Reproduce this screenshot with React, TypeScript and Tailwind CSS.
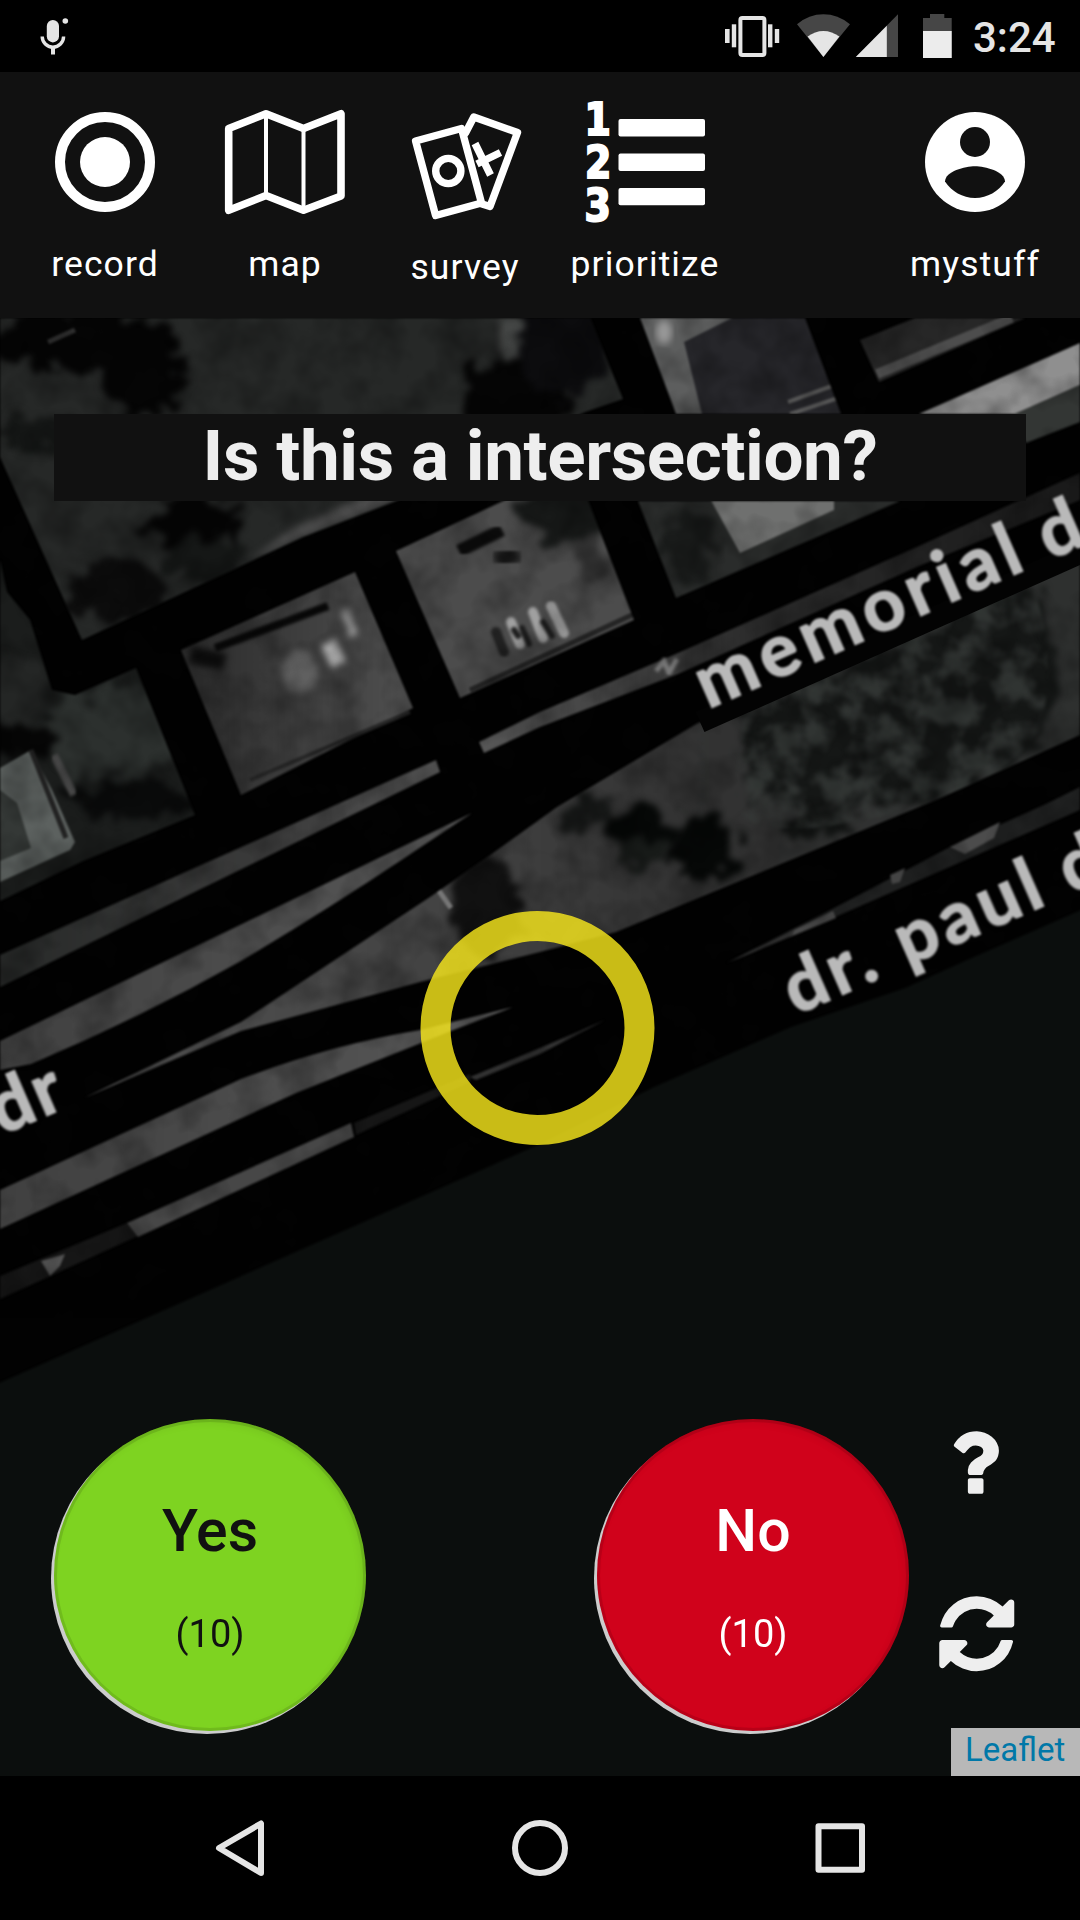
import type { ReactNode } from 'react';

function StatusBar() {
  return (
    <div className="flex h-[72px] items-start bg-black text-[#e5e5e5]">
      <svg className="ml-[36px] h-[72px] w-[36px]" viewBox="36 0 36 72" fill="none">
        <rect x="46.8" y="20" width="12.2" height="22.4" rx="6.1" fill="#e5e5e5" />
        <path d="M42.2 36.5a10.7 10.7 0 0 0 21.4 0" stroke="#e5e5e5" strokeWidth="3.4" />
        <path d="M53 46v8.5" stroke="#e5e5e5" strokeWidth="4" />
        <circle cx="65.3" cy="21" r="2.8" fill="#e5e5e5" />
      </svg>
      <svg className="ml-auto h-[72px] w-[240px]" viewBox="720 0 240 72" fill="#e5e5e5">
        <rect x="740.4" y="18" width="24" height="37" rx="2" fill="none" stroke="#e5e5e5" strokeWidth="4" />
        <rect x="725" y="29" width="4.6" height="14" />
        <rect x="731.8" y="24.3" width="4.4" height="23" />
        <rect x="768" y="24.3" width="4.4" height="23" />
        <rect x="774.8" y="29" width="4.4" height="14" />
        <path d="M823.4 57L797 24.2Q809 14.3 823.4 14.3T850 24.2z" fill="#464646" />
        <path d="M823.4 57L807.6 36.6Q815 31 823.4 31T839.4 36.6z" />
        <path d="M855.8 57L898 14.3V57z" fill="#464646" />
        <path d="M855.8 57L886.8 25.7V57z" />
        <path d="M923 58V18h7v-4h14.3v4h7.4v40z" fill="#464646" />
        <path d="M923 31h28.700v27H923z" fill="#ececec" />
      </svg>
      <div className="w-[120px] pl-[13px] pt-[8px] text-[42px] font-medium leading-[60px]">3:24</div>
    </div>
  );
}

function Tab({ label, x, low, children }: { label: string; x: number; low?: boolean; children: ReactNode }) {
  return (
    <div className="flex w-[180px] flex-col items-center">
      <svg className="h-[160px] w-[180px]" viewBox={`${x} 72 180 160`} fill="none" stroke="#fff">
        {children}
      </svg>
      <span className={low ? 'mt-[13px] text-[35.5px] leading-[44px] tracking-[1.1px]' : 'mt-[10px] text-[35.5px] leading-[44px] tracking-[1.1px]'}>
        {label}
      </span>
    </div>
  );
}

function Header() {
  return (
    <div className="flex h-[246px] bg-[#111111] px-[15px] text-white">
      <Tab label="record" x={15}>
        <circle cx="105" cy="162" r="45" strokeWidth="10" />
        <circle cx="105" cy="162" r="25" fill="#fff" stroke="none" />
      </Tab>
      <Tab label="map" x={195}>
        <path d="M228.700 128.500L266 113.800L303.500 128.500L341 113.800V196L303.500 210.300L266 195.500L228.700 210.300z" strokeWidth="7.6" strokeLinejoin="round" />
        <path d="M266 116v78M303.500 130v78" strokeWidth="4" />
      </Tab>
      <Tab label="survey" x={375} low>
        <g strokeWidth="7.400" strokeLinejoin="round" strokeLinecap="round">
          <path d="M415.600 141L461.500 128.500L481.500 203L435.600 215.500z" />
          <path d="M465.500 133L473.800 117L517.500 132.500L490 206.500L482 204" />
          <circle cx="448.300" cy="171" r="12.600" />
          <path d="M475 143.500L490.500 175M500.500 152.500L477 164" strokeLinecap="butt" />
        </g>
      </Tab>
      <Tab label="prioritize" x={555}>
        <g fill="#fff" stroke="none">
          <rect x="618.500" y="119" width="86.500" height="17.500" rx="2" />
          <rect x="618.500" y="153.500" width="86.500" height="17.500" rx="2" />
          <rect x="618.500" y="188" width="86.500" height="17.200" rx="2" />
        </g>
        <g fill="#fff" stroke="#fff" strokeWidth="2.200" fontFamily="DejaVu Sans, sans-serif" fontWeight="700" fontSize="44">
          <text transform="translate(584.500 135.300) scale(.86 1)">1</text>
          <text transform="translate(585 178.300) scale(.86 1)">2</text>
          <text transform="translate(584.500 220.700) scale(.86 1)">3</text>
        </g>
      </Tab>
      <div className="ml-auto">
        <Tab label="mystuff" x={885}>
          <circle cx="975" cy="162" r="50" fill="#fff" stroke="none" />
          <circle cx="975" cy="142" r="15" fill="#111" stroke="none" />
          <path d="M945 181.500C945.200 171.500 965 166.300 975 166.300S1004.800 171.500 1005 181.500C998.500 191.200 987.500 198 975 198S951.500 191.200 945 181.500z" fill="#111" stroke="none" />
        </Tab>
      </div>
    </div>
  );
}

function Aerial() {
  const park = '84,1098 241,1022 430,897 482,861 557,807 698,723 740,711 1022,585 1080,562 1080,735 936,800 616,932 540,952 420,982 241,1031';
  return (
    <svg className="absolute inset-0 h-full w-full" viewBox="0 318 1080 1458">
      <defs>
        <filter id="speckle" x="0" y="0" width="100%" height="100%" colorInterpolationFilters="sRGB">
          <feTurbulence type="fractalNoise" baseFrequency=".025" numOctaves="3" seed="7" />
          <feColorMatrix values="0 0 0 0 0  0 0 0 0 0  0 0 0 0 0  1.600 0 0 0 -.6" />
        </filter>
        <filter id="leaves" x="-20%" y="-20%" width="140%" height="140%" colorInterpolationFilters="sRGB">
          <feTurbulence type="fractalNoise" baseFrequency=".05" numOctaves="3" seed="3" result="n" />
          <feDisplacementMap in="SourceGraphic" in2="n" scale="46" xChannelSelector="R" yChannelSelector="G" />
          <feGaussianBlur stdDeviation="3" />
        </filter>
        <filter id="canopy" x="0" y="0" width="100%" height="100%" colorInterpolationFilters="sRGB">
          <feTurbulence type="fractalNoise" baseFrequency=".04" numOctaves="3" seed="12" />
          <feColorMatrix values="0 0 0 0 .22  0 0 0 0 .235  0 0 0 0 .228  3.400 0 0 0 -1.300" result="t" />
          <feComposite in="t" in2="SourceAlpha" operator="in" />
          <feGaussianBlur stdDeviation="1.500" />
        </filter>
        <filter id="soft" colorInterpolationFilters="sRGB"><feGaussianBlur stdDeviation="1.200" /></filter>
        <filter id="softer" colorInterpolationFilters="sRGB"><feGaussianBlur stdDeviation="3.500" /></filter>
        <linearGradient id="lot1" x1="0" y1="0" x2="1" y2="0">
          <stop offset="0" stopColor="#2b2b2b" />
          <stop offset="1" stopColor="#505050" />
        </linearGradient>
        <linearGradient id="gore" x1="0" y1="0" x2="1" y2="0">
          <stop offset="0" stopColor="#404040" />
          <stop offset="1" stopColor="#585858" />
        </linearGradient>
        <linearGradient id="verge" x1="0" y1="0" x2="1" y2="0">
          <stop offset="0" stopColor="#282a29" />
          <stop offset=".65" stopColor="#3c3c3c" />
          <stop offset="1" stopColor="#555" />
        </linearGradient>
        <linearGradient id="verge2" x1="0" y1="0" x2="1" y2="0">
          <stop offset="0" stopColor="#585858" />
          <stop offset=".45" stopColor="#2c2c2c" />
          <stop offset="1" stopColor="#191919" />
        </linearGradient>
        <linearGradient id="grass" x1="0" y1="0" x2="1" y2="0">
          <stop offset="0" stopColor="#525252" />
          <stop offset=".4" stopColor="#414141" />
          <stop offset=".6" stopColor="#333" />
          <stop offset="1" stopColor="#2e302f" />
        </linearGradient>
        <clipPath id="blockA"><polygon points="0,457 0,318 590,318 623,399 585,412 396,501 303,537 82,640" /></clipPath>
        <clipPath id="blockD"><polygon points="0,560 7,592 30,620 52,690 75,695 136,668 195,815 83,861 0,901" /></clipPath>
        <clipPath id="lotF"><polygon points="396,551 516,495 586,495 634,620 460,698" /></clipPath>
        <clipPath id="blockH"><polygon points="638,501 900,501 676,598" /></clipPath>
        <clipPath id="blockG"><polygon points="640,318 805,318 841,414 676,414" /></clipPath>
        <clipPath id="parkClip"><polygon points={park} /></clipPath>
      </defs>
      <rect y="318" width="1080" height="1458" fill="#020202" />

      <g filter="url(#soft)">
        <g clipPath="url(#blockA)">
          <rect y="318" width="640" height="330" fill="#262827" />
          <path d="M500 318h70l-40 60-30-20z" fill="#444645" filter="url(#softer)" />
          <path d="M290 530L400 480L396 501L303 537L250 560z" fill="#4c4c4c" filter="url(#softer)" />
          <g filter="url(#leaves)" fill="#050505">
            <ellipse cx="80" cy="340" rx="95" ry="28" />
            <ellipse cx="145" cy="370" rx="42" ry="46" />
            <ellipse cx="40" cy="430" rx="40" ry="14" fill="#141615" />
            <ellipse cx="520" cy="395" rx="55" ry="38" />
            <ellipse cx="565" cy="345" rx="45" ry="50" fill="#0c0c0e" />
            <ellipse cx="195" cy="520" rx="48" ry="26" />
            <ellipse cx="205" cy="560" rx="36" ry="24" fill="#151716" />
            <ellipse cx="118" cy="590" rx="50" ry="32" fill="#0c0c0c" />
          </g>
          <path d="M48 342L75 330" stroke="#2e2e2e" strokeWidth="5" />
        </g>
        <g clipPath="url(#blockD)">
          <rect y="550" width="200" height="360" fill="#1b1d1c" />
          <g filter="url(#leaves)">
            <ellipse cx="110" cy="735" rx="70" ry="46" fill="#2c302e" />
            <ellipse cx="14" cy="690" rx="40" ry="36" fill="#242625" />
            <ellipse cx="20" cy="740" rx="42" ry="16" fill="#060606" />
            <ellipse cx="135" cy="800" rx="70" ry="18" fill="#0a0b0b" />
          </g>
          <polygon points="0,768 31,750 52,790 75,842 70,850 0,882" fill="#5c615f" />
          <polygon points="0,790 17,803 31,848 0,861" fill="#343836" />
          <path d="M31 750L66 838" stroke="#222" strokeWidth="5" />
          <path d="M54 755L74 795" stroke="#484848" strokeWidth="8" filter="url(#soft)" />
        </g>

        <polygon points="181,650 355,572 413,708 241,795" fill="url(#lot1)" />
        <path d="M215 648L328 606" stroke="#080808" strokeWidth="8" filter="url(#soft)" />
        <path d="M250 780L410 712" stroke="#262626" strokeWidth="4" />
        <g filter="url(#softer)">
          <ellipse cx="300" cy="672" rx="18" ry="22" fill="#606060" />
          <path d="M328 642l11 22" stroke="#d4d4d4" strokeWidth="15" />
          <path d="M345 610l9 26" stroke="#a4a4a4" strokeWidth="8" />
          <path d="M190 655L225 662" stroke="#0b0b0b" strokeWidth="18" />
        </g>

        <g clipPath="url(#lotF)">
          <rect x="390" y="490" width="250" height="220" fill="#4c4c4c" />
          <g filter="url(#leaves)">
            <ellipse cx="565" cy="515" rx="46" ry="28" fill="#171918" />
            <ellipse cx="590" cy="560" rx="16" ry="26" fill="#333" />
          </g>
          <path d="M459 551L502 530" stroke="#0c0c0c" strokeWidth="13" filter="url(#soft)" />
          <path d="M496 562L518 552" stroke="#141414" strokeWidth="20" filter="url(#softer)" />
          <g stroke="#a0a0a0" strokeWidth="10" strokeLinecap="round" filter="url(#soft)">
            <path d="M511 622l9 22M533 612l10 26M551 606l13 27" />
            <path d="M496 632l8 20" stroke="#222" />
            <path d="M522 628l7 16M543 622l9 14M514 630l4 6" stroke="#1c1c1c" strokeWidth="6" />
          </g>
          <path d="M470 690L634 614" stroke="#242424" strokeWidth="5" />
        </g>

        <g clipPath="url(#blockG)">
          <rect x="630" y="318" width="220" height="100" fill="#26262a" />
          <path d="M640 318H732L684 342L702 414H676z" fill="#5d5e5e" />
          <ellipse cx="664" cy="332" rx="8" ry="12" fill="#999" filter="url(#softer)" />
          <path d="M790 414L838 398M788 402L832 386" stroke="#5a5a5a" strokeWidth="4" />
        </g>
        <g clipPath="url(#blockH)">
          <rect x="630" y="495" width="280" height="110" fill="#2a2c2b" />
          <polygon points="708,495 834,495 834,510 740,553" fill="#6f706f" />
          <ellipse cx="688" cy="550" rx="26" ry="40" fill="#191b1a" filter="url(#leaves)" />
        </g>
        <polygon points="860,340 915,318 1025,318 879,382" fill="#272727" />
        <path d="M877 374L1012 318" stroke="#4d4d4d" strokeWidth="10" />
        <polygon points="919,414 1080,343 1080,385 1015,414" fill="#8f8f8f" />
        <polygon points="1015,414 1080,385 1080,422 1026,443" fill="#333634" />

        <polygon points="0,955 436,760 440,772 0,987" fill="url(#verge)" />
        <polygon points="479,742 540,712 678,653 919,546 1080,473 1080,500 919,566 678,674 540,727 484,753" fill="url(#verge2)" />
        <path d="M656 671l8-10 5 12 8-14" stroke="#777" strokeWidth="5" fill="none" filter="url(#soft)" />
        <path d="M0 1041L472 813L406 857Q330 908 241 961Q140 1018 31 1064L0 1070z" fill="url(#gore)" />

        <g clipPath="url(#parkClip)">
          <rect x="80" y="550" width="1000" height="560" fill="url(#grass)" />
          <g filter="url(#leaves)">
            <path d="M745 710L1030 580Q1065 650 1050 720Q990 800 880 810Q760 820 745 780z" fill="#151716" />
            <ellipse cx="640" cy="830" rx="34" ry="22" fill="#060807" />
            <ellipse cx="705" cy="850" rx="34" ry="34" fill="#060807" />
            <ellipse cx="640" cy="850" rx="28" ry="14" fill="#171a18" />
            <ellipse cx="485" cy="905" rx="36" ry="50" fill="#111" />
            <ellipse cx="590" cy="812" rx="30" ry="14" fill="#181a19" />
            <ellipse cx="820" cy="826" rx="40" ry="12" fill="#101211" />
          </g>
          <path d="M745 700L1030 580Q1060 650 1040 730Q990 800 860 820Q720 850 735 780z" fill="#fff" filter="url(#canopy)" opacity=".8" />
          <path d="M437 888l14 20" stroke="#777" strokeWidth="5" />
        </g>

        <path d="M0 1190L241 1079Q330 1045 420 1030L513 1007L451 1031L296 1093L0 1229z" fill="url(#gore)" />
        <polygon points="0,1276 127,1223 138,1236 0,1299" fill="#161616" />
        <polygon points="41,1261 65,1254 60,1266 50,1276" fill="#555" />
        <polygon points="127,1223 351,1123 354,1137 138,1237" fill="#474747" />
        <polygon points="354,1123 470,1074 470,1082 356,1135" fill="#161616" />
        <polygon points="470,1077 540,1048 605,1020 540,1054 476,1080" fill="#343434" />
        <polygon points="726,963 836,907 950,847 1046,804 1080,787 1080,810 833,918" fill="#1f2020" />
        <polygon points="790,932 833,911 836,918 790,937" fill="#4a4a4a" />
        <polygon points="730,962 795,929 792,936" fill="#333" />
        <polygon points="890,875 905,868 900,882 892,884" fill="#444" />
        <polygon points="950,847 1000,822 994,838 965,854" fill="#4c4c4c" />
      </g>
      <rect y="318" width="1080" height="1000" filter="url(#speckle)" opacity=".4" />

      <polygon points="-10,1387 540,1144 654,1087 791,1027 905,988 967,960 1090,906 1090,1790 -10,1790" fill="#0b0e0d" filter="url(#soft)" />
      <path d="M700 722L1080 553" stroke="#030303" strokeWidth="22" />

      <g fill="#b9b9b9" stroke="#b9b9b9" strokeWidth="1.800" fontFamily="Lato, sans-serif" fontSize="73" fontWeight="700" filter="url(#soft)">
        <text transform="translate(708 709) rotate(-23.700)" textLength="348">memorial</text>
        <text transform="translate(1050 560) rotate(-23.700)">d</text>
        <text transform="translate(796 1015) rotate(-23.800)" textLength="275">dr. paul</text>
        <text transform="translate(1071 894) rotate(-23.800)">d</text>
        <text transform="translate(2 1135) rotate(-23.500)" textLength="72">dr</text>
      </g>
      <circle cx="537.500" cy="1028" r="102" fill="none" stroke="#fbeb1b" strokeWidth="30" opacity=".8" />
    </svg>
  );
}

function Answer({ label, tone }: { label: string; tone: string }) {
  return (
    <button className={`flex size-[312px] flex-col items-center rounded-full pt-[77px] shadow-[-3px_3px_0_#ccc,inset_0_0_0_3px_rgba(0,0,0,.1),inset_-3px_3px_9px_rgba(0,0,0,.08)] ${tone}`}>
      <span className="text-[59px] font-medium leading-[70px]">{label}</span>
      <span className="mt-[44px] text-[38px] leading-[48px]">(10)</span>
    </button>
  );
}

function MapView() {
  return (
    <div className="relative h-[1458px] overflow-hidden">
      <Aerial />
      <div className="relative flex h-full flex-col pt-[96px]">
        <h1 className="mx-[54px] h-[87px] bg-[#111111] text-center text-[71px] font-bold leading-[83px] tracking-[-0.4px] text-[#eeeeee]">
          Is this a intersection?
        </h1>
        <div className="mt-auto flex items-start pl-[54px]">
          <Answer label="Yes" tone="bg-[#7ed321] text-[#111111]" />
          <div className="ml-[231px]">
            <Answer label="No" tone="bg-[#d0021b] text-white" />
          </div>
          <div className="ml-[24px] flex flex-col gap-[77px] pt-[6px]">
            <svg className="size-[87.500px]" viewBox="-10 0 1792 1792" fill="#eee">
              <path d="M1024 1128v240q0 16-12 28t-28 12h-240q-16 0-28-12t-12-28v-240q0-16 12-28t28-12h240q16 0 28 12t12 28zm316-600q0 54-15.500 101t-35 76.500-55 59.500-57.500 43.500-61 35.500q-41 23-68.500 65t-27.500 67q0 17-12 32.500t-28 15.500h-240q-15 0-25.500-18.500t-10.500-37.500v-45q0-83 65-156.500t143-108.500q59-27 84-56t25-76q0-42-46.500-74t-107.500-32q-65 0-108 29-35 25-107 115-13 16-31 16-12 0-25-8l-164-125q-13-10-15.500-25t5.500-28q160-266 464-266 80 0 161 31t146 83 106 127.500 41 158.500z" />
            </svg>
            <svg className="size-[87.500px]" viewBox="0 0 1792 1792" fill="#eee">
              <path d="M1639 1056q0 5-1 7-64 268-268 434.500t-478 166.500q-146 0-282.500-55t-243.500-157l-129 129q-19 19-45 19t-45-19-19-45v-448q0-26 19-45t45-19h448q26 0 45 19t19 45-19 45l-137 137q71 66 161 102t187 36q134 0 250-65t186-179q11-17 53-117 8-23 30-23h192q13 0 22.500 9.500t9.500 22.500zm25-800v448q0 26-19 45t-45 19h-448q-26 0-45-19t-19-45 19-45l138-138q-148-137-349-137-134 0-250 65t-186 179q-11 17-53 117-8 23-30 23h-199q-13 0-22.500-9.500t-9.500-22.500v-7q65-268 270-434.500t480-166.500q146 0 284 55.500t245 156.500l130-129q19-19 45-19t45 19 19 45z" />
            </svg>
          </div>
        </div>
        <div className="-mt-[3px] ml-auto h-[48px] w-[129px] bg-[#b8b8b8] pl-[14px] text-[33px] leading-[43px] text-[#0078a8]">
          Leaflet
        </div>
      </div>
    </div>
  );
}

function NavBar() {
  return (
    <div className="flex h-[144px] items-center justify-between bg-black px-[204px]">
      <svg className="size-[72px]" viewBox="204 1812 72 72" fill="none" stroke="#e5e5e5" strokeWidth="6" strokeLinejoin="round">
        <path d="M261 1823.500V1873L219 1848z" />
      </svg>
      <svg className="size-[72px]" viewBox="504 1812 72 72" fill="none" stroke="#e5e5e5" strokeWidth="6">
        <circle cx="540" cy="1848" r="25" />
      </svg>
      <svg className="size-[72px]" viewBox="804 1812 72 72" fill="none" stroke="#e5e5e5" strokeWidth="6" strokeLinejoin="round">
        <rect x="818.500" y="1826.200" width="43.500" height="43.500" />
      </svg>
    </div>
  );
}

export default function App() {
  return (
    <div className="h-[1920px] w-[1080px] overflow-hidden bg-black font-['Roboto',sans-serif]">
      <StatusBar />
      <Header />
      <MapView />
      <NavBar />
    </div>
  );
}
